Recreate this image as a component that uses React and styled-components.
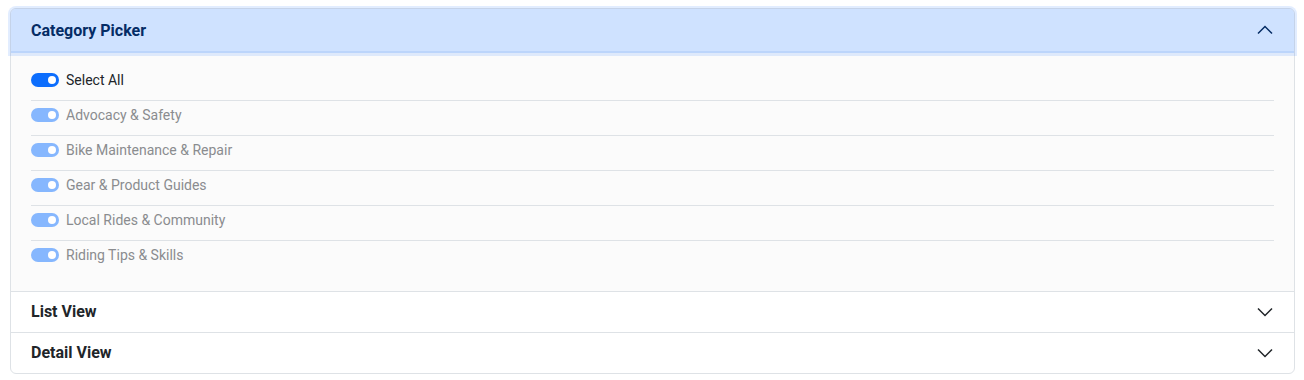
import React, { useState } from "react";
import styled, { createGlobalStyle } from "styled-components";

const GlobalStyle = createGlobalStyle`
  body {
    margin: 0;
    font-family: Roboto, "Liberation Sans", sans-serif;
    background: #ffffff;
  }
  * {
    box-sizing: border-box;
  }
`;

const Page = styled.div`
  padding: 8px 9px 10px 10px;
`;

const Accordion = styled.div`
  border: 1px solid #dee2e6;
  border-radius: 6px;
  background: #fff;
`;

const Item = styled.div`
  & + & {
    border-top: 1px solid #dee2e6;
  }
`;

const Header = styled.button`
  display: flex;
  align-items: center;
  justify-content: space-between;
  width: 100%;
  height: ${(p) => (p.$open ? "44px" : "40px")};
  padding: 0 20px ${(p) => (p.$open ? "2px" : "1px")} 20px;
  border: 0;
  margin: 0;
  font-family: inherit;
  font-size: 16px;
  font-weight: 700;
  text-align: left;
  cursor: pointer;
  color: ${(p) => (p.$open ? "#052c65" : "#212529")};
  background: ${(p) => (p.$open ? "#cfe2ff" : "transparent")};
  border-radius: ${(p) => (p.$first ? "5px 5px 0 0" : "0")};
  box-shadow: ${(p) =>
    p.$open
      ? "inset 0 -2px 0 #bcd5fb, 0 0 0 3px rgba(13, 110, 253, 0.12)"
      : "none"};
  position: relative;
`;

const Chevron = ({ up }) => (
  <svg width="18" height="18" viewBox="0 0 18 18" fill="none">
    <polyline
      points={up ? "2,12.5 9,5.5 16,12.5" : "2,5.5 9,12.5 16,5.5"}
      stroke="currentColor"
      strokeWidth="1.5"
    />
  </svg>
);

const Body = styled.div`
  background: #fbfbfb;
  padding: 12px 20px 16px 20px;
`;

const Row = styled.label`
  display: flex;
  align-items: center;
  gap: 7px;
  height: 35px;
  padding-bottom: 5px;
  font-size: 14px;
  color: ${(p) => (p.$muted ? "#8a8c8f" : "#212529")};
  & + & {
    border-top: 1px solid #dee2e6;
    padding-bottom: 6px;
  }
`;

const Switch = styled.span`
  position: relative;
  width: 28px;
  height: 14px;
  border-radius: 7px;
  background: ${(p) => (p.$muted ? "#86b7fe" : "#0d6efd")};
  flex-shrink: 0;
  &::after {
    content: "";
    position: absolute;
    right: 3px;
    top: 3px;
    width: 8px;
    height: 8px;
    border-radius: 50%;
    background: #fff;
  }
`;

const categories = [
  "Advocacy & Safety",
  "Bike Maintenance & Repair",
  "Gear & Product Guides",
  "Local Rides & Community",
  "Riding Tips & Skills",
];

export default function App() {
  const [open, setOpen] = useState("picker");
  const toggle = (k) => setOpen(open === k ? null : k);

  return (
    <Page>
      <GlobalStyle />
      <Accordion>
        <Item>
          <Header $first $open={open === "picker"} onClick={() => toggle("picker")}>
            Category Picker
            <Chevron up={open === "picker"} />
          </Header>
          {open === "picker" && (
            <Body>
              <Row>
                <Switch />
                Select All
              </Row>
              {categories.map((c) => (
                <Row key={c} $muted>
                  <Switch $muted />
                  {c}
                </Row>
              ))}
            </Body>
          )}
        </Item>
        <Item>
          <Header $open={open === "list"} onClick={() => toggle("list")}>
            List View
            <Chevron up={open === "list"} />
          </Header>
        </Item>
        <Item>
          <Header $open={open === "detail"} onClick={() => toggle("detail")}>
            Detail View
            <Chevron up={open === "detail"} />
          </Header>
        </Item>
      </Accordion>
    </Page>
  );
}
